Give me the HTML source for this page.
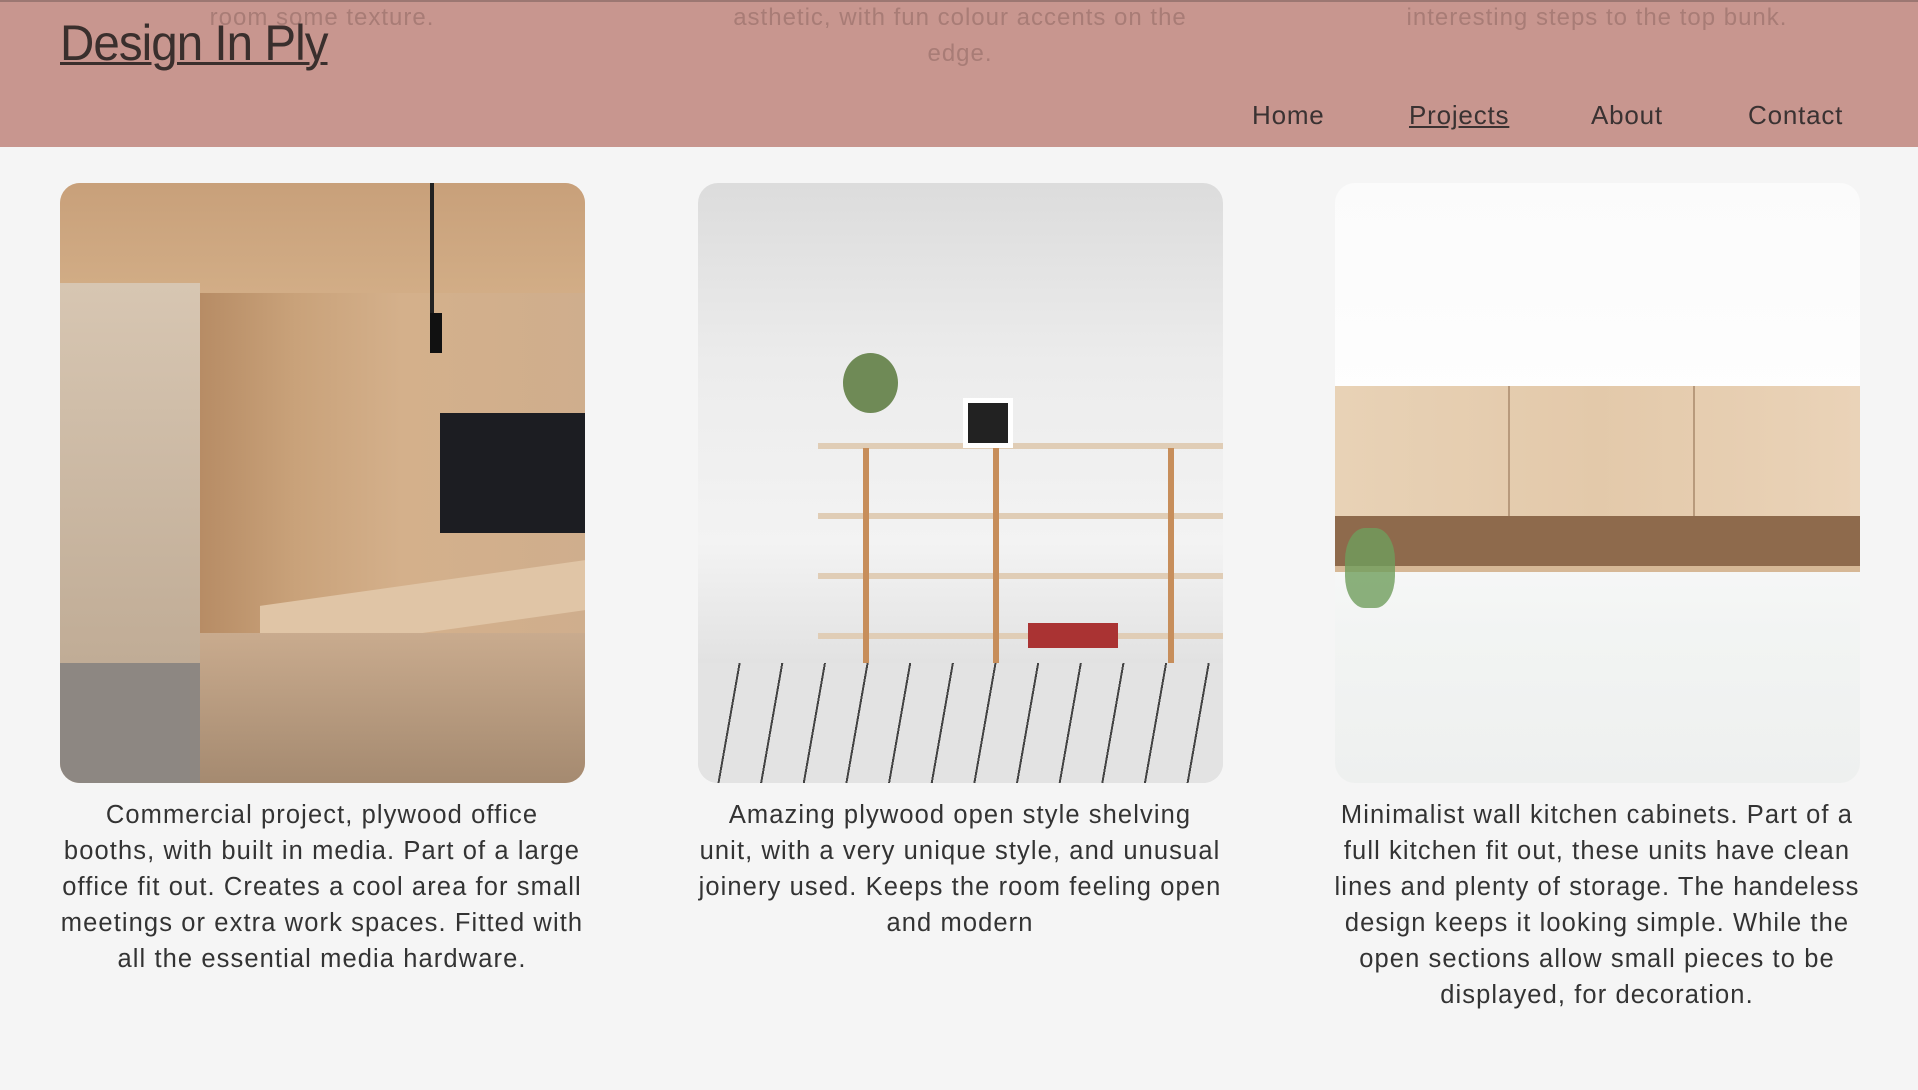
<!DOCTYPE html>
<html><head><meta charset="utf-8"><style>
*{margin:0;padding:0;box-sizing:border-box}
body{width:1918px;height:1090px;background:#f5f5f5;font-family:"Liberation Sans",sans-serif;position:relative;overflow:hidden}
.hdr{position:absolute;left:0;top:0;width:1918px;height:147px;background:#c8968f;border-top:2px solid #9c7772;overflow:hidden}
.fade{position:absolute;color:#a87c76;font-size:24px;text-align:center;line-height:36px;letter-spacing:1px;white-space:nowrap}
.logo{position:absolute;left:60px;top:12px;font-size:50px;color:#3a2f2d;text-decoration:underline;text-decoration-thickness:3px;transform:scaleX(0.95);transform-origin:left;letter-spacing:-1px;font-weight:300}
.nav{position:absolute;top:98px;font-size:26px;color:#3a3232;letter-spacing:0.8px}
.card{position:absolute;top:183px;width:525px;height:600px;border-radius:20px;overflow:hidden}
.txt{position:absolute;top:797px;width:600px;text-align:center;font-size:25.5px;line-height:36px;color:#333;letter-spacing:1.1px;white-space:nowrap}
</style></head><body>
<div class="hdr">
<div class="fade" style="left:122px;top:-2px;width:400px">room some texture.</div>
<div class="fade" style="left:660px;top:-2px;width:600px">asthetic, with fun colour accents on the<br>edge.</div>
<div class="fade" style="left:1297px;top:-2px;width:600px">interesting steps to the top bunk.</div>
<div class="logo">Design In Ply</div>
<div class="nav" style="left:1252px">Home</div>
<div class="nav" style="left:1409px;text-decoration:underline">Projects</div>
<div class="nav" style="left:1591px">About</div>
<div class="nav" style="left:1748px">Contact</div>
</div>

<div class="card" style="left:60px;background:linear-gradient(90deg,#d8c0a4 0%,#c9a888 15%,#b58a63 25%,#c9a27a 45%,#d4b08b 65%,#cfae8d 100%)">
<div style="position:absolute;left:0;top:0;width:525px;height:110px;background:linear-gradient(180deg,#c8a07a,#d2ad86)"></div>
<div style="position:absolute;left:0;top:100px;width:140px;height:500px;background:linear-gradient(180deg,#d7c6b2,#b9a48d)"></div>
<div style="position:absolute;left:0;top:480px;width:200px;height:120px;background:#8d8782"></div>
<div style="position:absolute;left:380px;top:230px;width:145px;height:120px;background:#1c1d22"></div>
<div style="position:absolute;left:370px;top:0;width:4px;height:130px;background:#222"></div>
<div style="position:absolute;left:370px;top:130px;width:12px;height:40px;background:#111"></div>
<div style="position:absolute;left:200px;top:400px;width:325px;height:50px;background:#e0c5a6;transform:skewY(-8deg)"></div>
<div style="position:absolute;left:140px;top:450px;width:385px;height:150px;background:linear-gradient(180deg,#c9ab8e,#a58a70)"></div>
</div>

<div class="card" style="left:698px;background:linear-gradient(180deg,#dcdcdc 0%,#ececec 30%,#f3f3f3 60%,#e2e2e2 80%,#d8d8d8 100%)">
<div style="position:absolute;left:120px;top:260px;width:405px;height:6px;background:#e0cdb6"></div>
<div style="position:absolute;left:120px;top:330px;width:405px;height:6px;background:#e0cdb6"></div>
<div style="position:absolute;left:120px;top:390px;width:405px;height:6px;background:#e0cdb6"></div>
<div style="position:absolute;left:120px;top:450px;width:405px;height:6px;background:#e0cdb6"></div>
<div style="position:absolute;left:165px;top:265px;width:6px;height:230px;background:#c78e5b"></div>
<div style="position:absolute;left:295px;top:265px;width:6px;height:260px;background:#c78e5b"></div>
<div style="position:absolute;left:470px;top:265px;width:6px;height:290px;background:#c78e5b"></div>
<div style="position:absolute;left:265px;top:215px;width:50px;height:50px;background:#222;border:5px solid #fff"></div>
<div style="position:absolute;left:145px;top:170px;width:55px;height:60px;border-radius:50%;background:#6f8a56"></div>
<div style="position:absolute;left:330px;top:440px;width:90px;height:25px;background:#a33"></div>
<div style="position:absolute;left:0;top:480px;width:525px;height:120px;background:repeating-linear-gradient(100deg,#e3e3e3 0 40px,#444 40px 42px)"></div>
</div>

<div class="card" style="left:1335px;background:linear-gradient(180deg,#fbfbfb 0%,#fefefe 40%,#f2f4f3 75%,#eef0ef 100%)">
<div style="position:absolute;left:0;top:203px;width:525px;height:130px;background:linear-gradient(90deg,#e8d2b6,#e3c9aa,#ead3b8)"></div>
<div style="position:absolute;left:173px;top:203px;width:2px;height:130px;background:#b89a7c"></div>
<div style="position:absolute;left:358px;top:203px;width:2px;height:130px;background:#b89a7c"></div>
<div style="position:absolute;left:0;top:333px;width:525px;height:50px;background:#8e6a4c"></div>
<div style="position:absolute;left:0;top:383px;width:525px;height:6px;background:#d6b896"></div>
<div style="position:absolute;left:10px;top:345px;width:50px;height:80px;border-radius:40%;background:#6f9d5c;opacity:.8"></div>
</div>

<div class="txt" style="left:22px">Commercial project, plywood office<br>booths, with built in media. Part of a large<br>office fit out. Creates a cool area for small<br>meetings or extra work spaces. Fitted with<br>all the essential media hardware.</div>
<div class="txt" style="left:660px">Amazing plywood open style shelving<br>unit, with a very unique style, and unusual<br>joinery used. Keeps the room feeling open<br>and modern</div>
<div class="txt" style="left:1297px">Minimalist wall kitchen cabinets. Part of a<br>full kitchen fit out, these units have clean<br>lines and plenty of storage. The handeless<br>design keeps it looking simple. While the<br>open sections allow small pieces to be<br>displayed, for decoration.</div>
</body></html>
